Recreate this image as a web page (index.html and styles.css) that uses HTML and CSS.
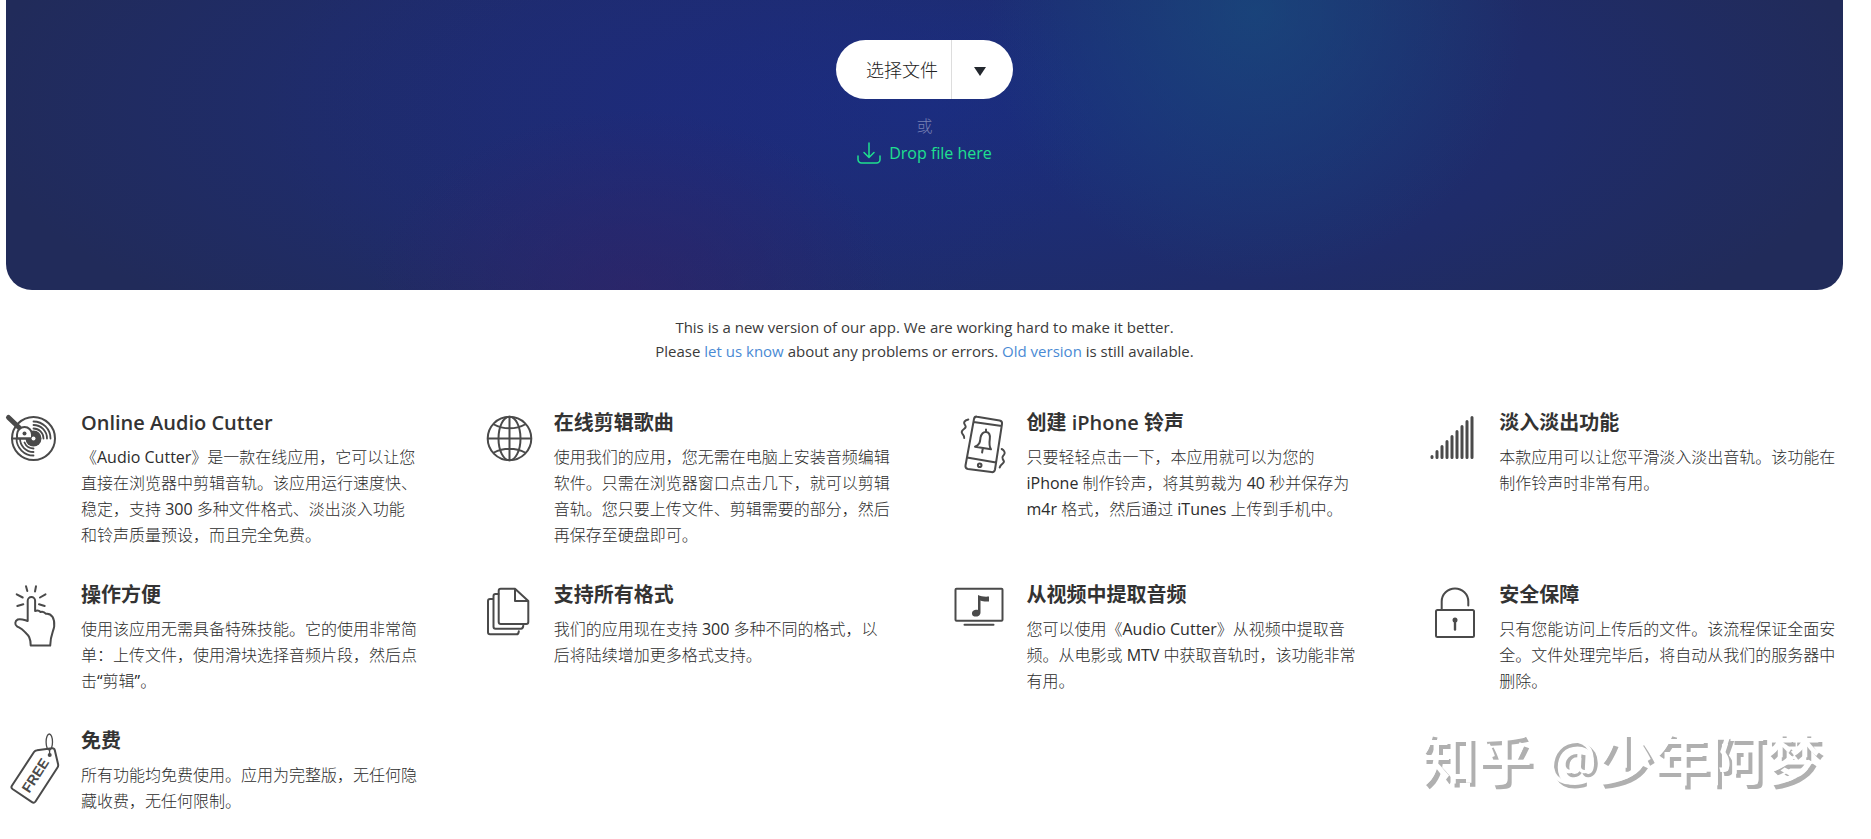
FILE: index.html
```html
<!DOCTYPE html>
<html lang="zh-CN">
<head>
    <meta charset="UTF-8">
    <meta name="viewport" content="width=device-width, initial-scale=1.0">
    <title>Online Audio Cutter</title>
    <link rel="stylesheet" href="styles.css">
</head>
<body>
    <main class="page">
        <section class="hero">
            <div class="picker">
                <button type="button" class="picker-open">选择文件</button>
                <button type="button" class="picker-more" aria-label="更多">
                    <svg width="12" height="9" viewBox="0 0 12 9"><path d="M0 0h12L6 9z" fill="#23272e"/></svg>
                </button>
            </div>
            <div class="or">或</div>
            <div class="drop">
                <svg width="24" height="22" viewBox="0 0 24 22" fill="none" stroke="#1fe08f" stroke-width="1.5" stroke-linecap="round" stroke-linejoin="round">
                    <path d="M12 1v14M7 10.500l5 5 5-5M1 14v3.500a3.500 3.500 0 0 0 3.500 3.500h15a3.500 3.500 0 0 0 3.500-3.500V14"/>
                </svg>
                <span>Drop file here</span>
            </div>
        </section>

        <p class="notice">
            This is a new version of our app. We are working hard to make it better.<br>
            Please <a href="#">let us know</a> about any problems or errors. <a href="#">Old version</a> is still available.
        </p>

        <section class="features">
            <article class="feature">
                <svg class="icon" viewBox="0 0 60 78">
                    <circle cx="27.500" cy="30.500" r="21.500"/>
                    <path d="M27.500 20.500a10 10 0 0 1 10 10M27.500 17a13.500 13.500 0 0 1 13.500 13.500M27.500 13.500a17 17 0 0 1 17 17M27.500 40.500a10 10 0 0 1-9-6M27.500 44a13.500 13.500 0 0 1-13.500-13.500M27.500 47.500a17 17 0 0 1-17-17" stroke-width="1.800"/>
                    <circle class="solid" cx="27.500" cy="30.500" r="8"/>
                    <path d="M2.500 9.500L13 19.500" stroke-width="5"/>
                    <path class="paper" d="M11 30.500v-4a7.500 7.500 0 0 1 15 0v4z"/>
                    <path d="M6 30.500h20"/>
                    <circle class="solid" cx="18.500" cy="25.500" r="2"/>
                    <circle class="hole" cx="27.500" cy="30.500" r="2"/>
                </svg>
                <div>
                    <h2>Online Audio Cutter</h2>
                    <p>《Audio Cutter》是一款在线应用，它可以让您直接在浏览器中剪辑音轨。该应用运行速度快、稳定，支持 300 多种文件格式、淡出淡入功能和铃声质量预设，而且完全免费。</p>
                </div>
            </article>

            <article class="feature">
                <svg class="icon" viewBox="0 0 60 78">
                    <circle cx="30.500" cy="30.500" r="21.800"/>
                    <ellipse cx="30.500" cy="30.500" rx="11" ry="21.800"/>
                    <path d="M30.500 9v43M9 30.500h43M15 16.500c9 5 22 5 31 0M15 44.500c9-5 22-5 31 0"/>
                </svg>
                <div>
                    <h2>在线剪辑歌曲</h2>
                    <p>使用我们的应用，您无需在电脑上安装音频编辑软件。只需在浏览器窗口点击几下，就可以剪辑音轨。您只要上传文件、剪辑需要的部分，然后再保存至硬盘即可。</p>
                </div>
            </article>

            <article class="feature">
                <svg class="icon" viewBox="0 0 60 78">
                    <path d="M25 8.700l22.500 3.700q3 .6 2.500 3.600l-7 45.500q-.6 3-3.600 2.600L16 61q-3-.5-2.500-3.500L22 11q.6-2.800 3-2.300zM21.500 14l28.200 4M15 49.500l29 5"/>
                    <circle cx="27.700" cy="57.300" r="1.800"/>
                    <path d="M34 21.500v2M23 38.700c5-2 5-5 5.500-9 .7-4 3-6.200 5.800-5.700 3 .5 4 3.300 3.500 7-.6 4-1 7 1.200 10.300zM30.700 41l-.6 3.500"/>
                    <path d="M16.300 11.500c-4 1-5 3-3.600 5s1.500 3-.7 4.500-3 3-1.500 5 2 2.500 1.700 4M49.700 41c2 1 4 3.500 2.500 5.500s-2.800 2.500-1.500 4.500 2 3 0 4.500-2.500 2-3 4"/>
                </svg>
                <div>
                    <h2>创建 iPhone 铃声</h2>
                    <p>只要轻轻点击一下，本应用就可以为您的 iPhone 制作铃声，将其剪裁为 40 秒并保存为 m4r 格式，然后通过 iTunes 上传到手机中。</p>
                </div>
            </article>

            <article class="feature">
                <svg class="icon" viewBox="0 0 60 78">
                    <path stroke-width="3" d="M8 48.500v1M13 43.500v6M18 38.500v11M23 33.500v16M28 28.500v21M33 23.500v26M38 18.500v31M43 13.500v36M48 9.500v40"/>
                </svg>
                <div>
                    <h2>淡入淡出功能</h2>
                    <p>本款应用可以让您平滑淡入淡出音轨。该功能在制作铃声时非常有用。</p>
                </div>
            </article>

            <article class="feature">
                <svg class="icon" viewBox="0 0 60 78">
                    <path d="M21.700 40V20.700a3.700 3.700 0 0 1 7.400 0V31c2-.8 4-.6 5.400 1 2-.8 4 0 5.500 1.800 3-.5 5 1 6.500 3 1.500 2.500 2 6 1.700 9.500-.6 5-3.700 8-4 19.300H24.700c0-10-3.700-11-6.700-14.500-2-2.200-4-3-7-4.800-2.500-1.500-2.200-5.500.7-6.800 3-1.200 6 .3 10 1.500z"/>
                    <path d="M20 6.300l1.300 4.700M30 6.300L29 11.500M10.700 14.300l6 3.200M39.500 14.300L34 17.500M11.300 26l6-1.800M38.700 26L33 24.200"/>
                </svg>
                <div>
                    <h2>操作方便</h2>
                    <p>使用该应用无需具备特殊技能。它的使用非常简单：上传文件，使用滑块选择音频片段，然后点击“剪辑”。</p>
                </div>
            </article>

            <article class="feature">
                <svg class="icon" viewBox="0 0 60 78">
                    <path d="M36 8.700H21.700q-2 0-2 2V42q0 2 2 2h25.600q2 0 2-2V21zM36 8.700V21h13.300"/>
                    <path d="M19.500 14h-3q-2 0-2 2v30.700q0 2 2 2H42q2 0 2.300-3M14.500 19H11q-2 0-2 2v31.300q0 2 2 2h26.500q2 0 2.300-3"/>
                </svg>
                <div>
                    <h2>支持所有格式</h2>
                    <p>我们的应用现在支持 300 多种不同的格式，以后将陆续增加更多格式支持。</p>
                </div>
            </article>

            <article class="feature">
                <svg class="icon" viewBox="0 0 60 78">
                    <rect x="3.500" y="8.700" width="47" height="32" rx="1"/>
                    <path d="M12.500 44.700h29"/>
                    <path class="solid" d="M26 15c3 1.500 6.500 2 11 1.600v4.800c-3.500.4-6.500 0-8.500-1v12c0 5-8 5.500-8.500 1.500-.3-3.200 3-4.500 6-4z"/>
                </svg>
                <div>
                    <h2>从视频中提取音频</h2>
                    <p>您可以使用《Audio Cutter》从视频中提取音频。从电影或 MTV 中获取音轨时，该功能非常有用。</p>
                </div>
            </article>

            <article class="feature">
                <svg class="icon" viewBox="0 0 60 78">
                    <rect x="12" y="30" width="38" height="27" rx="1.500"/>
                    <path d="M17.700 30v-8.500a13.300 13 0 0 1 26.600 0v4"/>
                    <circle class="solid" cx="31" cy="40" r="2.500"/>
                    <path d="M31 40v9.500" stroke-width="2.400"/>
                </svg>
                <div>
                    <h2>安全保障</h2>
                    <p>只有您能访问上传后的文件。该流程保证全面安全。文件处理完毕后，将自动从我们的服务器中删除。</p>
                </div>
            </article>

            <article class="feature">
                <svg class="icon" viewBox="0 0 60 78">
                    <path d="M31 24.200l15-2q2.300-.2 2.800 2l3.300 14q.4 1.800-.6 3.300L29.500 75.500q-1.500 2-3.500.7L6.500 63q-1.800-1.300-.6-3.300L28 26q1-1.600 3-1.800z"/>
                    <ellipse cx="43.300" cy="16" rx="3.200" ry="8" stroke-width="1.300"/>
                    <path d="M43.600 24v4" stroke-width="1.300"/>
                    <circle class="solid" cx="43.700" cy="29" r="2"/>
                    <text class="tag-text" transform="translate(33.500 52) rotate(-57)" text-anchor="middle">FREE</text>
                </svg>
                <div>
                    <h2>免费</h2>
                    <p>所有功能均免费使用。应用为完整版，无任何隐藏收费，无任何限制。</p>
                </div>
            </article>
        </section>
    </main>

    <div class="watermark">知乎 @少年阿梦</div>
</body>
</html>
```

FILE: styles.css
```css
* {
    box-sizing: border-box;
}
body {
    margin: 0;
    position: relative;
    font-family: "Open Sans", "Noto Sans CJK SC Light", "Noto Sans CJK SC", sans-serif;
    font-size: 16px;
    color: #3a3a3a;
    background-color: #fff;
    text-spacing-trim: space-all;
}
.page {
    padding: 0 28px 24px 6px;
}

/* upload area */
.hero {
    display: flex;
    flex-direction: column;
    align-items: center;
    padding: 40px 0 124px;
    border-radius: 0 0 26px 26px;
    background:
        radial-gradient(ellipse 270px 270px at 68% 4%, rgba(24, 76, 126, 0.7), rgba(24, 76, 126, 0)),
        radial-gradient(ellipse 260px 180px at 34% 100%, rgba(50, 34, 104, 0.6), rgba(50, 34, 104, 0)),
        radial-gradient(ellipse 420px 260px at 37% 38%, rgba(32, 40, 126, 0.4), rgba(32, 40, 126, 0)),
        radial-gradient(ellipse 52% 110% at 50% 36%, #1a2e80, #1f2c6a 65%, #212b5a);
}
.picker {
    display: flex;
    height: 59px;
    border-radius: 30px;
    background-color: #fff;
    overflow: hidden;
}
.picker button {
    border: 0;
    background: none;
    font: inherit;
    font-size: 18px;
    font-weight: 300;
    color: #222;
    cursor: pointer;
}
.picker .picker-open {
    padding: 0 13px 2px 30px;
}
.picker .picker-more {
    width: 62px;
    padding: 0 6px 2px 0;
    border-left: 1px solid #ddd;
}
.or {
    margin-top: 14px;
    line-height: 27px;
    font-weight: 300;
    color: #7880b4;
}
.drop {
    display: flex;
    align-items: center;
    gap: 8px;
    line-height: 26px;
    color: #1fe08f;
}

.notice {
    margin: 25px 0 45px;
    font-size: 15px;
    line-height: 24px;
    text-align: center;
}
.notice a {
    color: #4a8ad4;
    text-decoration: none;
}

/* feature list */
.features {
    display: grid;
    grid-template-columns: repeat(4, 1fr);
    gap: 32px 54px;
}
.feature {
    display: grid;
    grid-template-columns: 60px 1fr;
    gap: 15px;
    align-items: start;
}
.feature h2 {
    margin: 0 0 6px;
    font-family: "Open Sans", "Noto Sans CJK SC", sans-serif;
    font-size: 20px;
    font-weight: 600;
    line-height: 30px;
    color: #333;
}
.feature p {
    margin: 0;
    padding-right: 6px;
    line-height: 26px;
    color: #2c2c2c;
}
.icon {
    width: 60px;
    height: 78px;
    overflow: visible;
    fill: none;
    stroke: #4a4a4a;
    stroke-width: 2;
    stroke-linecap: round;
    stroke-linejoin: round;
}
.icon .solid {
    fill: #4a4a4a;
    stroke: none;
}
.icon .paper {
    fill: #fff;
}
.icon .hole {
    fill: #fff;
    stroke: none;
}
.icon .tag-text {
    font-family: "Liberation Sans", sans-serif;
    font-size: 14px;
    font-weight: 700;
    fill: #4a4a4a;
    stroke: none;
}

.watermark {
    position: absolute;
    right: 50px;
    bottom: 40px;
    font-family: "Open Sans", "Noto Sans CJK SC", sans-serif;
    font-size: 56px;
    font-weight: 500;
    line-height: 80px;
    color: #fff;
    text-shadow: 4px 4px 0 #b0b0b0;
    pointer-events: none;
}
```
